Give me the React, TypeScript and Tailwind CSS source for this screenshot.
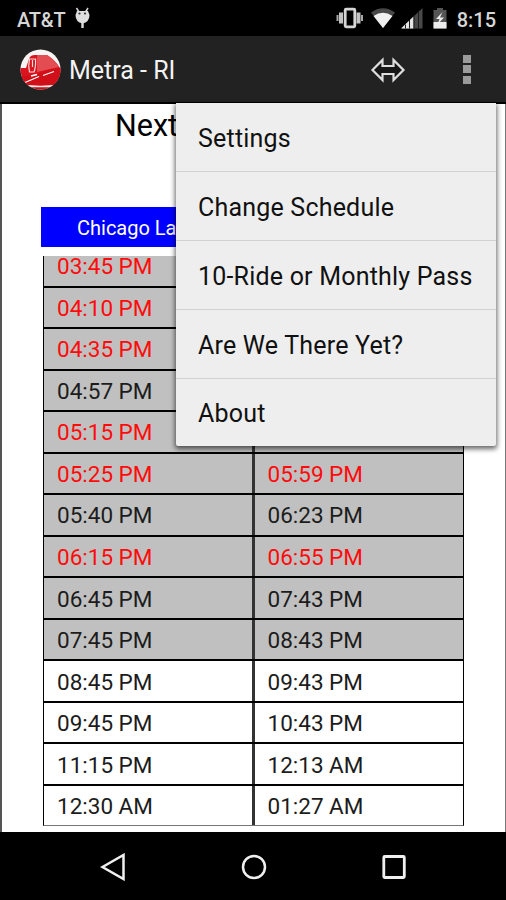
const menuItems = [
  'Settings',
  'Change Schedule',
  '10-Ride or Monthly Pass',
  'Are We There Yet?',
  'About',
];

// arrival times of the first rows sit under the open menu
const trains = [
  { departs: '03:45 PM', arrives: '', express: true, past: true },
  { departs: '04:10 PM', arrives: '', express: true, past: true },
  { departs: '04:35 PM', arrives: '', express: true, past: true },
  { departs: '04:57 PM', arrives: '', express: false, past: true },
  { departs: '05:15 PM', arrives: '', express: true, past: true },
  { departs: '05:25 PM', arrives: '05:59 PM', express: true, past: true },
  { departs: '05:40 PM', arrives: '06:23 PM', express: false, past: true },
  { departs: '06:15 PM', arrives: '06:55 PM', express: true, past: true },
  { departs: '06:45 PM', arrives: '07:43 PM', express: false, past: true },
  { departs: '07:45 PM', arrives: '08:43 PM', express: false, past: true },
  { departs: '08:45 PM', arrives: '09:43 PM', express: false, past: false },
  { departs: '09:45 PM', arrives: '10:43 PM', express: false, past: false },
  { departs: '11:15 PM', arrives: '12:13 AM', express: false, past: false },
  { departs: '12:30 AM', arrives: '01:27 AM', express: false, past: false },
];

function StatusBar() {
  return (
    <div className="flex h-[36px] shrink-0 items-center bg-black pl-[17px] pr-[10px] text-[#d6d6d6]">
      <span className="mt-[3px] text-[20px] font-medium leading-none tracking-[-0.2px]">AT&amp;T</span>
      <svg className="ml-[9px]" width="17" height="22" viewBox="0 0 17 22">
        <path d="M2.500 1 5 5M14 1 11.500 5" stroke="#d6d6d6" strokeWidth="1.500" />
        <path d="M8.500 14v7" stroke="#d6d6d6" strokeWidth="2.500" />
        <path d="M3 4h11l1.500 4q0 7-7 8.500-7-1.500-7-8.500z" fill="#dedede" />
        <circle cx="5.500" cy="6.500" r="1.100" fill="#333" />
        <circle cx="11" cy="6.500" r="1.100" fill="#333" />
      </svg>
      <div className="ml-auto flex items-center">
        {/* vibrate, wifi, signal, battery */}
        <svg width="112" height="24" viewBox="336 6 112 24">
          <path d="M337.500 15v6M362 15v6" stroke="#a8a8a8" strokeWidth="2" />
          <path d="M341 12.500v11M358.500 12.500v11" stroke="#c4c4c4" strokeWidth="4" />
          <rect x="345.200" y="9.200" width="9.600" height="17.600" rx="1" fill="#000" stroke="#d6d6d6" strokeWidth="2.800" />
          <path d="M371 12.500Q383 4 395 12.500L383 28z" fill="#484848" />
          <path d="M373.500 16Q383 9.500 392.500 16L383 28z" fill="#f0f0f0" />
          <path d="M401.500 28.500V28L422.500 8v20.500z" fill="#484848" />
          <path d="M401.500 28.500V28L413.500 16.500v12z" fill="#e6e6e6" />
          <path d="M405.500 24.500v4M409.500 20v8.500M414 15v13.500M418.500 11v17.500" stroke="#1a1a1a" strokeWidth="1" />
          <path d="M433.500 10h3.500V8h6v2h3.500v18.500h-13z" fill="#555" />
          <path d="M433.500 22h13v6.500h-13z" fill="#ededed" />
          <path d="M442.500 12 436 19h3.500l-2 5.500 6.500-7h-4z" fill="#ededed" />
        </svg>
        <span className="ml-[9px] mt-[3px] text-[20px] font-medium leading-none">8:15</span>
      </div>
    </div>
  );
}

function ActionBar() {
  return (
    <div className="flex h-[68px] shrink-0 items-center border-b-2 border-black bg-[#222] pl-[20px] pr-[35px]">
      <svg width="42" height="43" viewBox="0 0 42 43">
        <defs>
          <clipPath id="badge">
            <circle cx="20.500" cy="21.500" r="20" />
          </clipPath>
        </defs>
        <g clipPath="url(#badge)">
          <rect width="42" height="43" fill="#f8f4f4" />
          <path d="M0 20h6l3-9q1-4 6-4h12q8 5 13 13h2v17H0z" fill="#d9141f" />
          <path d="M17 7h10q8 5 12 12l-9 2-13 3z" fill="#e34d52" />
          <path d="M0 29 14 27l17-6 11-1v17H0z" fill="#d00f19" />
          <path d="M0 40Q20 34 42 40v3H0z" fill="#c8101a" />
          <path d="M3 38.500h35" stroke="#f8e8e8" strokeWidth="1.500" />
          <path d="M9.500 11Q8 18 9.500 24h4.500q2-5 1.500-13zM12.500 12v7" stroke="#f6dada" strokeWidth="1.200" fill="none" />
          <path d="M5 34.500 19 28.500M23 27.500l11-4M11 28l6-1.500" stroke="#fff" strokeWidth="1.300" fill="none" />
        </g>
      </svg>
      <h1 className="ml-[7px] pt-[2px] text-[25px] leading-none text-[#f3f3f3]">Metra - RI</h1>
      <svg className="ml-auto mt-[1px]" width="36" height="26" viewBox="0 0 36 26">
        <path d="M2.500 13 12.500 3v6h11V3L33.500 13l-10 10v-6h-11v6z" fill="#171717" stroke="#dedede" strokeWidth="2.200" />
      </svg>
      <div className="ml-[57px] flex flex-col gap-[2.500px]">
        <span className="size-[8px] bg-[#9b9b9b]" />
        <span className="size-[8px] bg-[#9b9b9b]" />
        <span className="size-[8px] bg-[#9b9b9b]" />
      </div>
    </div>
  );
}

function OverflowMenu() {
  return (
    <ul className="absolute left-[176px] top-[103px] w-[320px] rounded-b-[2px] bg-[#eee] shadow-[0_2px_5px_1px_rgba(0,0,0,0.6)]">
      {menuItems.map((item) => (
        <li
          key={item}
          className="flex h-[69px] items-center border-b border-[#d2d2d2] pl-[22px] pt-[4px] text-[25px] tracking-[0.2px] text-[#111] last:h-[67px] last:border-b-0 last:pt-[3px]"
        >
          {item}
        </li>
      ))}
    </ul>
  );
}

function Schedule() {
  return (
    <main className="flex h-[728px] flex-col overflow-hidden border-l-2 border-r border-l-[#555] border-r-[#777] bg-white">
      <h2 className="h-[103px] pl-[113px] pt-[4px] text-[30.500px] leading-[36px] text-black">Next</h2>
      <div className="ml-[39px] flex h-[40px] w-[423px] items-center bg-[#0000fe] pl-[36px] pt-[2px] text-[20px] text-white">
        Chicago La
      </div>
      <div className="ml-[41px] mt-[9px] w-[421px] overflow-hidden">
        <div className="-mt-[10px] text-[22.500px]">
          {trains.map((train) => (
            <div
              key={train.departs}
              className={`grid h-[41.520px] grid-cols-2 border-x border-b-2 border-black last:h-[40px] last:border-b last:border-b-[#777] ${train.past ? 'bg-[#c0c0c0]' : 'bg-white'} ${train.express ? 'text-[#fe0b0b]' : 'text-[#1c1c1c]'}`}
            >
              <div className="-mr-px flex items-center border-r-3 border-[#333] pl-[13px] pt-[3px]">{train.departs}</div>
              <div className="flex items-center pl-[14px] pt-[3px]">{train.arrives}</div>
            </div>
          ))}
        </div>
      </div>
    </main>
  );
}

function NavBar() {
  return (
    <nav className="flex h-[68px] shrink-0 items-center justify-between bg-black pl-[100px] pr-[99px] pt-[1px]">
      <svg width="26" height="28" viewBox="0 0 26 28">
        <path d="M2.500 14 23.500 2v24z" fill="none" stroke="#f0f0f0" strokeWidth="2.500" />
      </svg>
      <svg width="28" height="28" viewBox="0 0 28 28">
        <circle cx="14" cy="14" r="11" fill="none" stroke="#f0f0f0" strokeWidth="2.500" />
      </svg>
      <svg width="26" height="28" viewBox="0 0 26 28">
        <rect x="2.800" y="3.500" width="20.500" height="21" rx="1" fill="none" stroke="#f0f0f0" strokeWidth="2.800" />
      </svg>
    </nav>
  );
}

export default function App() {
  return (
    <div className="relative flex h-[900px] w-[506px] flex-col overflow-hidden bg-black font-['Roboto',sans-serif]">
      <StatusBar />
      <ActionBar />
      <Schedule />
      <NavBar />
      <OverflowMenu />
    </div>
  );
}
